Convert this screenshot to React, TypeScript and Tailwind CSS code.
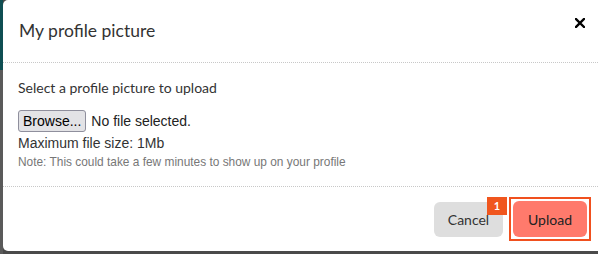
export default function App() {
  return (
    <div className="flex w-[598px] h-[254px] bg-[#4a4a4a] overflow-hidden">
      {/* backdrop strip showing behind the modal */}
      <div className="flex flex-col w-[3px] shrink-0">
        <div className="h-[70px] bg-[#0f4e52]" />
        <div className="flex-1 bg-[#5a5a5a]" />
      </div>

      <div className="flex flex-col flex-1 h-[251px] bg-white rounded-l-[5px] text-[#333]">
        {/* Header */}
        <div className="flex justify-between h-[63px] border-b border-dotted border-[#c8c8c8] pl-[16px] pr-[13px]">
          <h4 className="pt-[19px] text-[17.5px] leading-[24px]" style={{ fontFamily: 'Lato, sans-serif' }}>
            My profile picture
          </h4>
          <button className="mt-[18px] w-[10px] h-[10px] flex items-center justify-center" aria-label="Close">
            <svg width="10" height="10" viewBox="0 0 10 10">
              <path d="M1 1L9 9M9 1L1 9" stroke="#000" strokeWidth="2.4" strokeLinecap="square" />
            </svg>
          </button>
        </div>

        {/* Body */}
        <div className="flex flex-col h-[124px] border-b border-dotted border-[#c8c8c8] pl-[15px] pt-[15px]">
          <p className="text-[14px] leading-[20px]" style={{ fontFamily: 'Lato, sans-serif' }}>
            Select a profile picture to upload
          </p>
          <div className="flex items-center gap-[5px] mt-[12px]" style={{ fontFamily: '"Liberation Sans", Arial, sans-serif' }}>
            <button className="h-[22px] px-[4px] border border-[#8f8f9d] rounded-[3px] bg-[#e3e3e6] text-[14px] leading-[18px] text-black">
              Browse...
            </button>
            <span className="text-[14px] text-[#222]">No file selected.</span>
          </div>
          <p className="mt-[3px] text-[14px] leading-[17px] text-[#333]" style={{ fontFamily: '"Liberation Sans", Arial, sans-serif' }}>
            Maximum file size: 1Mb
          </p>
          <p className="mt-[3px] text-[11.9px] leading-[15px] text-[#777]" style={{ fontFamily: '"Liberation Sans", Arial, sans-serif' }}>
            Note: This could take a few minutes to show up on your profile
          </p>
        </div>

        {/* Footer */}
        <div className="flex flex-1 items-center justify-end gap-[6px] pr-[7px]" style={{ fontFamily: 'Lato, sans-serif' }}>
          <button className="w-[69px] h-[35px] rounded-[6px] bg-[#dedede] text-[14px] text-[#333]">
            Cancel
          </button>
          <div className="relative">
            <span className="absolute -left-[22px] top-0 w-[20px] h-[18px] flex items-center justify-center bg-[#f0561e] text-white text-[11px] font-bold">
              1
            </span>
            <div className="border-2 border-[#f0501e] p-[2px]">
              <button className="w-[74px] h-[36px] rounded-[6px] bg-[#ff7a6c] text-[14px] text-[#222]">
                Upload
              </button>
            </div>
          </div>
        </div>
      </div>
    </div>
  );
}
